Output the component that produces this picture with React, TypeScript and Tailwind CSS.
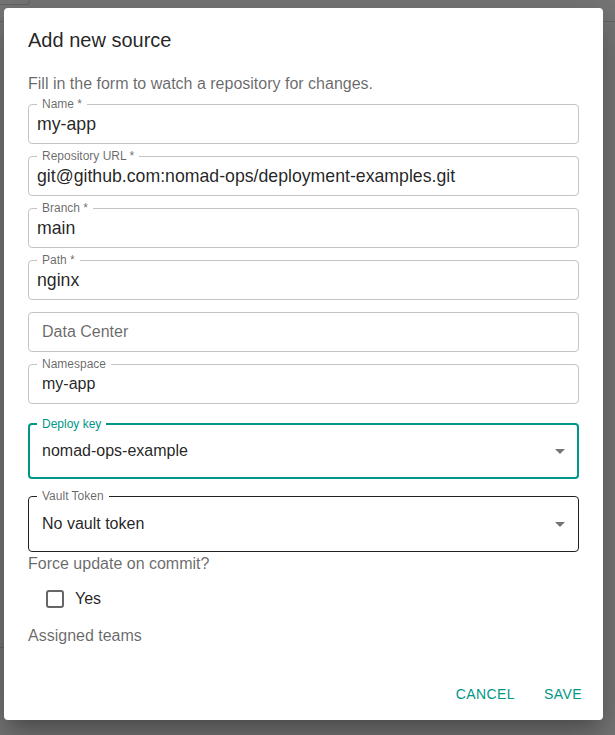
import { ReactNode } from "react";

const TEAL = "text-[#009688]";

function TextField({
  label,
  value,
  required,
  placeholder,
}: {
  label?: string;
  value?: string;
  required?: boolean;
  placeholder?: string;
}) {
  return (
    <div
      className={
        required
          ? "relative flex h-10 items-center rounded border border-[#c4c4c4] px-[8px]"
          : "relative flex h-10 items-center rounded border border-[#c4c4c4] px-[13px]"
      }
    >
      {label && (
        <span className="absolute -top-[8px] left-2 bg-white px-[5px] text-xs leading-[14px] text-black/60">
          {label}
          {required && " *"}
        </span>
      )}
      {value ? (
        <span
          className={
            required
              ? "text-[17.7px] text-black/[0.87]"
              : "text-base text-black/[0.87]"
          }
        >
          {value}
        </span>
      ) : (
        <span className="text-base text-black/60">{placeholder}</span>
      )}
    </div>
  );
}

function ArrowDrop() {
  return (
    <svg viewBox="0 0 24 24" className="ml-auto h-6 w-6 fill-black/[0.54]">
      <path d="M7 10l5 5 5-5z" />
    </svg>
  );
}

function SelectField({
  label,
  value,
  focused,
  children,
}: {
  label: string;
  value: string;
  focused?: boolean;
  children?: ReactNode;
}) {
  return (
    <div
      className={
        focused
          ? "relative flex h-14 items-center rounded border-2 border-[#009688] pl-3 pr-[5px]"
          : "relative flex h-14 items-center rounded border border-[#212121] pl-[13px] pr-[6px]"
      }
    >
      <span
        className={
          focused
            ? "absolute -top-[8px] left-[7px] bg-white px-[5px] text-xs leading-[14px] text-[#009688]"
            : "absolute -top-[8px] left-2 bg-white px-[5px] text-xs leading-[14px] text-black/60"
        }
      >
        {label}
      </span>
      <span className="text-base text-black/[0.87]">{value}</span>
      <ArrowDrop />
      {children}
    </div>
  );
}

export default function App() {
  return (
    <div className="relative h-[735px] w-[615px] overflow-hidden bg-[#777777] font-['Liberation_Sans',Arial,sans-serif]">
      {/* page behind the backdrop */}
      <div className="absolute left-0 top-0 h-[5px] w-[30px] rounded-br border-b border-r border-[#666]" />
      <div className="absolute left-0 right-0 top-[21px] h-px bg-[#666]" />
      <div className="absolute left-0 top-[647px] h-px w-[10px] bg-[#666]" />

      <div className="relative ml-1 mt-2 flex h-[712px] w-[599px] flex-col rounded bg-white shadow-[0px_11px_15px_-7px_rgba(0,0,0,0.2),0px_24px_38px_3px_rgba(0,0,0,0.14),0px_9px_46px_8px_rgba(0,0,0,0.12)]">
        <h2 className="px-6 py-4 text-[20px] leading-8 font-normal text-black/[0.87]">
          Add new source
        </h2>

        <div className="flex flex-col px-6 pb-5">
          <p className="text-base leading-6 text-black/60">
            Fill in the form to watch a repository for changes.
          </p>

          <div className="mt-2 flex flex-col gap-3">
            <TextField label="Name" required value="my-app" />
            <TextField
              label="Repository URL"
              required
              value="git@github.com:nomad-ops/deployment-examples.git"
            />
            <TextField label="Branch" required value="main" />
            <TextField label="Path" required value="nginx" />
            <TextField placeholder="Data Center" />
            <TextField label="Namespace" value="my-app" />
          </div>

          <div className="mt-[19px] flex flex-col gap-[17px]">
            <SelectField label="Deploy key" value="nomad-ops-example" focused />
            <SelectField label="Vault Token" value="No vault token" />
          </div>

          <p className="text-base leading-6 text-black/60">Force update on commit?</p>

          <label className="mt-[2px] flex h-[42px] items-center pl-[18px]">
            <span className="h-[18px] w-[18px] rounded-[3px] border-2 border-black/60" />
            <span className="ml-[11px] text-base text-black/[0.87]">Yes</span>
          </label>

          <p className="mt-1 text-base leading-6 text-black/60">Assigned teams</p>
        </div>

        <div className="flex justify-end gap-2 p-2">
          <button
            className={`h-9 min-w-16 rounded px-2 text-sm font-normal uppercase tracking-[0.02857em] ${TEAL}`}
          >
            Cancel
          </button>
          <button
            className={`h-9 min-w-16 rounded px-2 text-sm font-normal uppercase tracking-[0.02857em] ${TEAL}`}
          >
            Save
          </button>
        </div>
      </div>
    </div>
  );
}
